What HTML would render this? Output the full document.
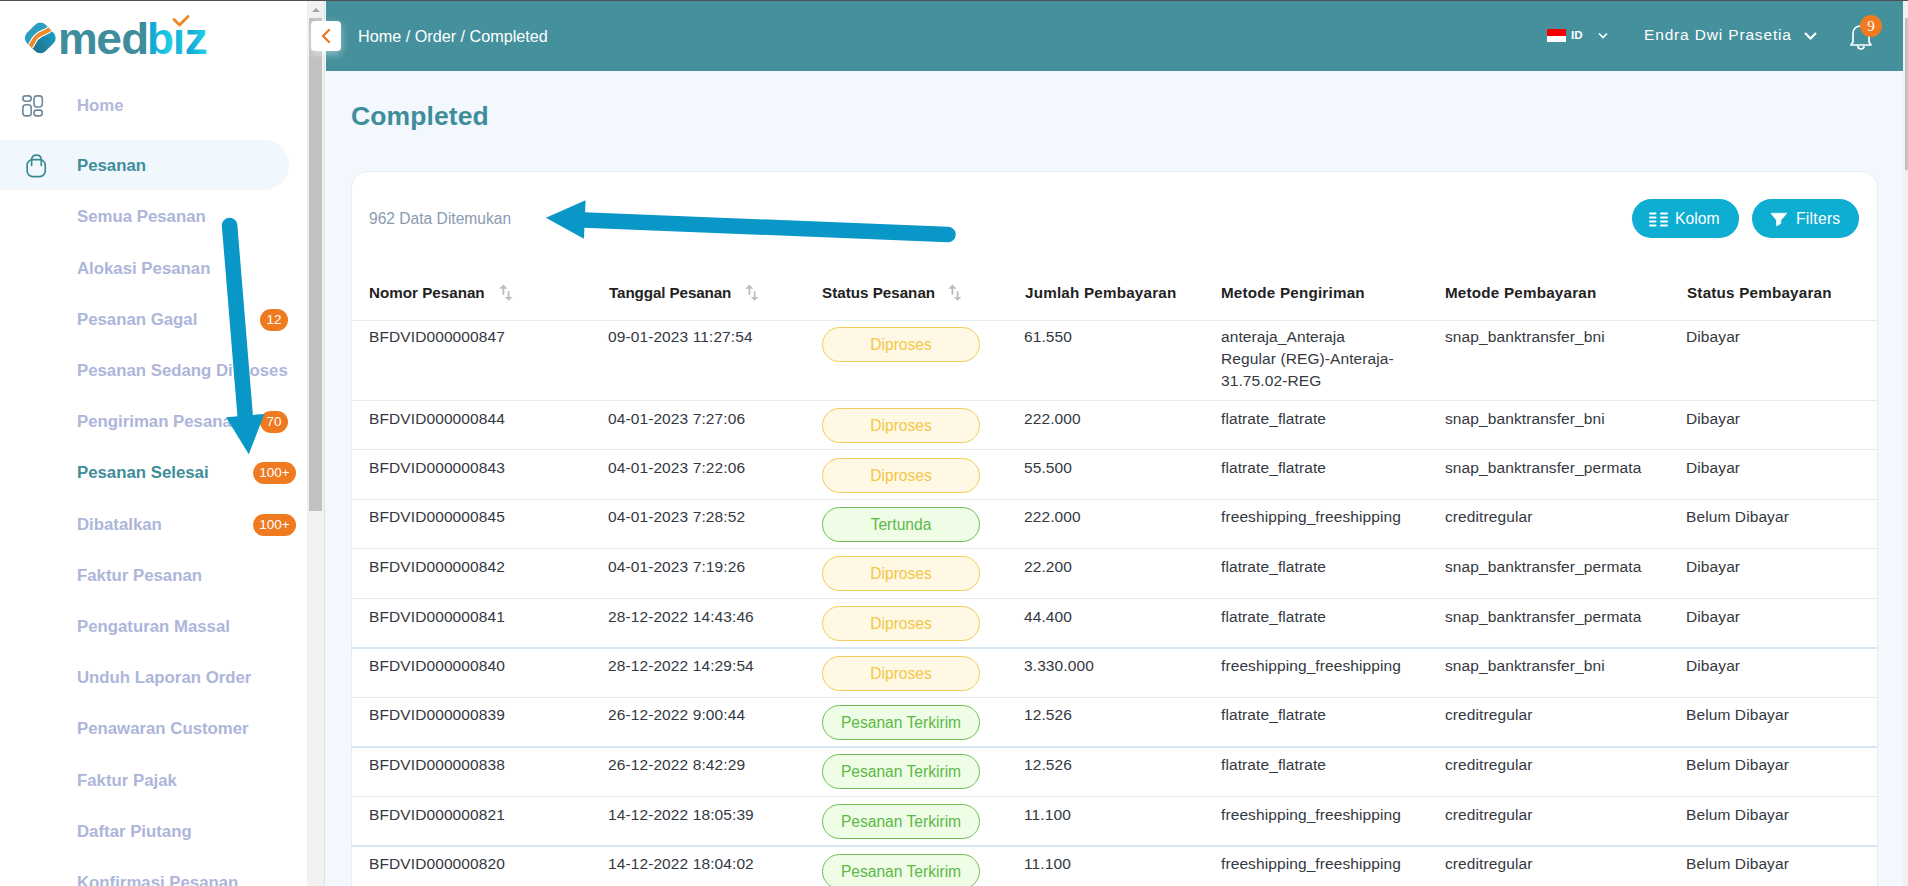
<!DOCTYPE html>
<html><head><meta charset="utf-8">
<style>
*{box-sizing:border-box}
html,body{margin:0;padding:0}
body{width:1908px;height:886px;overflow:hidden;position:relative;background:#f2f8fd;font-family:"Liberation Sans",sans-serif}
.a{position:absolute;white-space:nowrap}
#topline{left:0;top:0;width:1908px;height:1px;background:#505050;z-index:50}
#sidebar{left:0;top:0;width:307px;height:886px;background:#fff}
#sbtrack{left:307px;top:1px;width:18px;height:885px;background:#f1f1f1;border-right:1px solid #e2e2e2}
#sbthumb{left:309px;top:18px;width:13px;height:493px;background:#c1c1c1}
.nav{left:77px;font-size:16.8px;font-weight:bold;color:#adb6da;line-height:20px}
.badge{height:22px;border-radius:11px;background:#ef7a1f;color:#fff;font-size:13.5px;line-height:22px;text-align:center}
#header{left:326px;top:1px;width:1577px;height:70px;background:#44909c}
#rtrack{left:1903px;top:1px;width:5px;height:885px;background:#f1f1f1}
#rthumb{left:1905px;top:18px;width:3px;height:152px;background:#c1c1c1}
#card{left:350.5px;top:170.5px;width:1527px;height:760px;background:#fff;border:1px solid #e6edf3;border-radius:17px}
.th{font-size:15.2px;font-weight:bold;color:#222;line-height:20px}
.td{font-size:15.5px;color:#343841;line-height:22px;letter-spacing:0.1px}
.rowb{left:351px;width:1526px;height:1px;background:#e3ecf3}
.pill{left:822px;width:158px;height:35px;border-radius:18px;font-size:15.6px;text-align:center;line-height:33px}
.py{border:1px solid #f2cd57;background:#fff8e5;color:#f2c745}
.pg{border:1px solid #6fc156;background:#effde6;color:#5cb848}
.btn{top:199px;height:39px;border-radius:20px;background:#0eadd2;color:#fff;font-size:15.7px;line-height:39px}
</style></head>
<body>
<div class="a" id="topline"></div>
<div class="a" id="sidebar"></div>

<!-- logo -->
<svg class="a" style="left:0;top:0" width="230" height="70" viewBox="0 0 230 70">
  <defs>
    <linearGradient id="lg1" x1="0" y1="0" x2="1" y2="0"><stop offset="0" stop-color="#0f9fd0"/><stop offset="1" stop-color="#22d4e8"/></linearGradient>
    <linearGradient id="lg3" x1="0.2" y1="0.9" x2="0.9" y2="0.4"><stop offset="0" stop-color="#1b6a83"/><stop offset="0.5" stop-color="#1d819f"/><stop offset="1" stop-color="#1aa0ca"/></linearGradient>
    <clipPath id="cp1"><rect x="27.4" y="25" width="26" height="26" rx="7.5" transform="rotate(-45 40.4 38)"/></clipPath>
  </defs>
  <g clip-path="url(#cp1)">
    <rect x="20" y="18" width="42" height="42" fill="url(#lg3)"/>
    <path d="M20 18 H62 V22 L52 27.5 C49.5 29.5 47.5 31 45 32 C41 33.5 38 35 35.5 38 C33 41 32.5 44.5 29.5 47.5 L20 52 Z" fill="#2a9fc1"/>
    <path d="M29.5 47.5 C32.5 44.5 33 41 35.5 38 C38 35 41 33.5 45 32 C47.5 31 49.5 29.5 52 27.5" stroke="#fff" stroke-width="6.4" fill="none"/>
    <path d="M29.5 47.5 C32.5 44.5 33 41 35.5 38 C38 35 41 33.5 45 32 C47.5 31 49.5 29.5 52 27.5" stroke="#ef8a2c" stroke-width="4.2" fill="none"/>
  </g>
  <text transform="translate(58.06 53.5) scale(1.004 1)" font-family="Liberation Sans" font-weight="bold" font-size="44.5" fill="#3e8d9c">m</text>
  <text transform="translate(96.20 53.5) scale(1.038 1)" font-family="Liberation Sans" font-weight="bold" font-size="44.5" fill="#3e8d9c">e</text>
  <text transform="translate(121.13 53.5) scale(1.026 1)" font-family="Liberation Sans" font-weight="bold" font-size="44.5" fill="#3e8d9c">d</text>
  <text transform="translate(147.08 53.5) scale(0.994 1)" font-family="Liberation Sans" font-weight="bold" font-size="44.5" fill="url(#lg1)">b</text>
  <text transform="translate(173.06 53.5) scale(0.966 1)" font-family="Liberation Sans" font-weight="bold" font-size="44.5" fill="url(#lg1)">ı</text>
  <text transform="translate(184.66 53.5) scale(1.034 1)" font-family="Liberation Sans" font-weight="bold" font-size="44.5" fill="url(#lg1)">z</text>
  <path d="M174 19.5 L179.5 25 L188 16.5" stroke="#ec8a2c" stroke-width="3" fill="none" stroke-linecap="round" stroke-linejoin="round"/>
</svg>

<!-- Home icon -->
<svg class="a" style="left:21px;top:94px" width="24" height="24" viewBox="0 0 24 24" fill="none" stroke="#70879b" stroke-width="1.6">
  <rect x="1.9" y="1.9" width="8.3" height="5.3" rx="2.6"/>
  <rect x="1.9" y="10.8" width="8.3" height="11.1" rx="3"/>
  <rect x="13" y="1.9" width="8.3" height="11.1" rx="3"/>
  <rect x="13" y="16.1" width="8.3" height="5.8" rx="2.6"/>
</svg>
<div class="a nav" style="top:96.3px;color:#b2b8dc">Home</div>

<!-- Pesanan active -->
<div class="a" style="left:0;top:140px;width:289px;height:50px;background:#f0f7fd;border-radius:0 25px 25px 0"></div>
<svg class="a" style="left:25px;top:152px" width="22" height="26" viewBox="0 0 22 26" fill="none" stroke="#3b8a92" stroke-width="1.7" stroke-linecap="round">
  <rect x="2.15" y="7.65" width="18.1" height="16.9" rx="5.5"/>
  <path d="M6.6 13.3 V8 Q6.6 3.1 11.45 3.1 Q16.3 3.1 16.3 8 V13.3"/>
</svg>
<div class="a nav" style="top:156.3px;color:#3f8d9b">Pesanan</div>

<div class="a nav" style="top:207.3px">Semua Pesanan</div>
<div class="a nav" style="top:258.5px">Alokasi Pesanan</div>
<div class="a nav" style="top:309.7px">Pesanan Gagal</div>
<div class="a nav" style="top:360.9px">Pesanan Sedang Diproses</div>
<div class="a nav" style="top:412.1px">Pengiriman Pesanan</div>
<div class="a nav" style="top:463.3px;color:#3f8d9b">Pesanan Selesai</div>
<div class="a nav" style="top:514.5px">Dibatalkan</div>
<div class="a nav" style="top:565.7px">Faktur Pesanan</div>
<div class="a nav" style="top:616.9px">Pengaturan Massal</div>
<div class="a nav" style="top:668.1px">Unduh Laporan Order</div>
<div class="a nav" style="top:719.3px">Penawaran Customer</div>
<div class="a nav" style="top:770.5px">Faktur Pajak</div>
<div class="a nav" style="top:821.7px">Daftar Piutang</div>
<div class="a nav" style="top:872.9px">Konfirmasi Pesanan</div>

<div class="a badge" style="left:260px;top:309px;width:28px">12</div>
<div class="a badge" style="left:260px;top:411px;width:28px">70</div>
<div class="a badge" style="left:253px;top:462px;width:43px">100+</div>
<div class="a badge" style="left:253px;top:514px;width:43px">100+</div>

<div class="a" id="sbtrack"></div>
<div class="a" id="sbthumb"></div>
<svg class="a" style="left:307px;top:0px" width="18" height="16" viewBox="0 0 18 16"><path d="M5 12 L9 8 L13 12 Z" fill="#a3a3a3"/></svg>

<!-- header -->
<div class="a" id="header"></div>
<div class="a" style="left:311px;top:21px;width:30px;height:30px;background:#fff;border-radius:4px;box-shadow:0 3px 8px rgba(255,255,255,0.45)"></div>
<svg class="a" style="left:311px;top:21px" width="30" height="30" viewBox="0 0 30 30"><path d="M18 9 L12 15 L18 21" stroke="#e8792a" stroke-width="2.4" fill="none" stroke-linecap="round" stroke-linejoin="round"/></svg>
<div class="a" style="left:358px;top:26px;font-size:16.2px;line-height:20px;color:#fff">Home / Order / Completed</div>

<!-- flag -->
<div class="a" style="left:1547px;top:28.5px;width:19px;height:7px;background:#f40000"></div>
<div class="a" style="left:1547px;top:35.5px;width:19px;height:6.5px;background:#fff"></div>
<div class="a" style="left:1571px;top:28px;font-size:11.6px;font-weight:bold;line-height:14px;color:#fff">ID</div>
<svg class="a" style="left:1597px;top:30px" width="12" height="12" viewBox="0 0 12 12"><path d="M2 3.5 L6 7.5 L10 3.5" stroke="#fff" stroke-width="1.6" fill="none"/></svg>
<div class="a" style="left:1644px;top:24.5px;font-size:15.5px;line-height:20px;color:#fff;letter-spacing:0.84px">Endra Dwi Prasetia</div>
<svg class="a" style="left:1803px;top:29px" width="15" height="13" viewBox="0 0 15 13"><path d="M2 4 L7.5 9.5 L13 4" stroke="#fff" stroke-width="2.2" fill="none"/></svg>
<!-- bell -->
<svg class="a" style="left:1848px;top:22px" width="26" height="30" viewBox="0 0 26 30" fill="none" stroke="#fff" stroke-width="1.7">
  <path d="M3 23 H23 L21 20 V12 Q21 4 13 4 Q5 4 5 12 V20 Z" stroke-linejoin="round"/>
  <path d="M10 24 Q10 27 13 27 Q16 27 16 24"/>
</svg>
<div class="a" style="left:1860px;top:14.5px;width:22px;height:22px;border-radius:11px;background:#ef7a1f;color:#fff;font-family:'Liberation Serif',serif;font-size:15px;line-height:22px;text-align:center">9</div>

<div class="a" id="rtrack"></div>
<div class="a" id="rthumb"></div>

<!-- title -->
<div class="a" style="left:351px;top:101px;font-size:26.5px;font-weight:bold;line-height:30px;color:#3f8d9b;letter-spacing:0.1px">Completed</div>

<!-- card -->
<div class="a" id="card"></div>
<div class="a" style="left:369px;top:209px;font-size:15.6px;line-height:20px;color:#8a9bb1">962 Data Ditemukan</div>

<div class="a btn" style="left:1632px;width:107px"></div>
<svg class="a" style="left:1648px;top:212px" width="21" height="16" viewBox="0 0 21 16" fill="#fff">
  <rect x="1" y="0.5" width="7.5" height="2" rx="1"/><rect x="1" y="4.5" width="7.5" height="2" rx="1"/><rect x="1" y="8.5" width="7.5" height="2" rx="1"/><rect x="1" y="12.5" width="7.5" height="2" rx="1"/>
  <rect x="12" y="0.5" width="8" height="2" rx="1"/><rect x="12" y="4.5" width="8" height="2" rx="1"/><rect x="12" y="8.5" width="8" height="2" rx="1"/><rect x="12" y="12.5" width="8" height="2" rx="1"/>
</svg>
<div class="a" style="left:1675px;top:209px;font-size:15.7px;line-height:20px;color:#fff">Kolom</div>

<div class="a btn" style="left:1752px;width:107px"></div>
<svg class="a" style="left:1770px;top:212px" width="18" height="15" viewBox="0 0 18 15" fill="#fff">
  <path d="M0.8 1.2 H16.9 L10.8 8.3 V11.6 L6.5 14 V8.3 Z" stroke="#fff" stroke-width="0.6" stroke-linejoin="round"/>
</svg>
<div class="a" style="left:1796px;top:209px;font-size:15.7px;line-height:20px;color:#fff;letter-spacing:0.25px">Filters</div>

<!-- table header -->
<div class="a th" style="left:369px;top:283px">Nomor Pesanan</div>
<div class="a th" style="left:609px;top:283px;letter-spacing:-0.1px">Tanggal Pesanan</div>
<div class="a th" style="left:822px;top:283px">Status Pesanan</div>
<div class="a th" style="left:1025px;top:283px;letter-spacing:0.22px">Jumlah Pembayaran</div>
<div class="a th" style="left:1221px;top:283px;letter-spacing:0.22px">Metode Pengiriman</div>
<div class="a th" style="left:1445px;top:283px;letter-spacing:0.22px">Metode Pembayaran</div>
<div class="a th" style="left:1687px;top:283px;letter-spacing:0.22px">Status Pembayaran</div>

<svg class="a" style="left:497px;top:283px" width="16" height="19" viewBox="0 0 16 19"><path d="M6.4 5 V11.8 M11.6 8.2 V14.5" stroke="#bdbdbd" stroke-width="1.8"/><path d="M6.4 1.5 L2.3 5.8 H10.5 Z M11.6 17.8 L7.8 14 H15.4 Z" fill="#bdbdbd"/></svg>
<svg class="a" style="left:743px;top:283px" width="16" height="19" viewBox="0 0 16 19"><path d="M6.4 5 V11.8 M11.6 8.2 V14.5" stroke="#bdbdbd" stroke-width="1.8"/><path d="M6.4 1.5 L2.3 5.8 H10.5 Z M11.6 17.8 L7.8 14 H15.4 Z" fill="#bdbdbd"/></svg>
<svg class="a" style="left:946px;top:283px" width="16" height="19" viewBox="0 0 16 19"><path d="M6.4 5 V11.8 M11.6 8.2 V14.5" stroke="#bdbdbd" stroke-width="1.8"/><path d="M6.4 1.5 L2.3 5.8 H10.5 Z M11.6 17.8 L7.8 14 H15.4 Z" fill="#bdbdbd"/></svg>

<!--ROWS-->
<div class="a rowb" style="top:320px"></div>
<div class="a td" style="left:369px;top:326px">BFDVID000000847</div>
<div class="a td" style="left:608px;top:326px">09-01-2023 11:27:54</div>
<div class="a pill py" style="top:327px">Diproses</div>
<div class="a td" style="left:1024px;top:326px">61.550</div>
<div class="a td" style="left:1221px;top:326px">anteraja_Anteraja<br>Regular (REG)-Anteraja-<br>31.75.02-REG</div>
<div class="a td" style="left:1445px;top:326px">snap_banktransfer_bni</div>
<div class="a td" style="left:1686px;top:326px">Dibayar</div>
<div class="a rowb" style="top:399.8px"></div>
<div class="a td" style="left:369px;top:408px">BFDVID000000844</div>
<div class="a td" style="left:608px;top:408px">04-01-2023 7:27:06</div>
<div class="a pill py" style="top:408px">Diproses</div>
<div class="a td" style="left:1024px;top:408px">222.000</div>
<div class="a td" style="left:1221px;top:408px">flatrate_flatrate</div>
<div class="a td" style="left:1445px;top:408px">snap_banktransfer_bni</div>
<div class="a td" style="left:1686px;top:408px">Dibayar</div>
<div class="a rowb" style="top:449.3px"></div>
<div class="a td" style="left:369px;top:457px">BFDVID000000843</div>
<div class="a td" style="left:608px;top:457px">04-01-2023 7:22:06</div>
<div class="a pill py" style="top:458px">Diproses</div>
<div class="a td" style="left:1024px;top:457px">55.500</div>
<div class="a td" style="left:1221px;top:457px">flatrate_flatrate</div>
<div class="a td" style="left:1445px;top:457px">snap_banktransfer_permata</div>
<div class="a td" style="left:1686px;top:457px">Dibayar</div>
<div class="a rowb" style="top:498.8px"></div>
<div class="a td" style="left:369px;top:506px">BFDVID000000845</div>
<div class="a td" style="left:608px;top:506px">04-01-2023 7:28:52</div>
<div class="a pill pg" style="top:507px">Tertunda</div>
<div class="a td" style="left:1024px;top:506px">222.000</div>
<div class="a td" style="left:1221px;top:506px">freeshipping_freeshipping</div>
<div class="a td" style="left:1445px;top:506px">creditregular</div>
<div class="a td" style="left:1686px;top:506px">Belum Dibayar</div>
<div class="a rowb" style="top:548.3px"></div>
<div class="a td" style="left:369px;top:556px">BFDVID000000842</div>
<div class="a td" style="left:608px;top:556px">04-01-2023 7:19:26</div>
<div class="a pill py" style="top:556px">Diproses</div>
<div class="a td" style="left:1024px;top:556px">22.200</div>
<div class="a td" style="left:1221px;top:556px">flatrate_flatrate</div>
<div class="a td" style="left:1445px;top:556px">snap_banktransfer_permata</div>
<div class="a td" style="left:1686px;top:556px">Dibayar</div>
<div class="a rowb" style="top:597.8px"></div>
<div class="a td" style="left:369px;top:606px">BFDVID000000841</div>
<div class="a td" style="left:608px;top:606px">28-12-2022 14:43:46</div>
<div class="a pill py" style="top:606px">Diproses</div>
<div class="a td" style="left:1024px;top:606px">44.400</div>
<div class="a td" style="left:1221px;top:606px">flatrate_flatrate</div>
<div class="a td" style="left:1445px;top:606px">snap_banktransfer_permata</div>
<div class="a td" style="left:1686px;top:606px">Dibayar</div>
<div class="a rowb" style="top:647.3px;background:#d6e6f3;height:1.6px"></div>
<div class="a td" style="left:369px;top:655px">BFDVID000000840</div>
<div class="a td" style="left:608px;top:655px">28-12-2022 14:29:54</div>
<div class="a pill py" style="top:656px">Diproses</div>
<div class="a td" style="left:1024px;top:655px">3.330.000</div>
<div class="a td" style="left:1221px;top:655px">freeshipping_freeshipping</div>
<div class="a td" style="left:1445px;top:655px">snap_banktransfer_bni</div>
<div class="a td" style="left:1686px;top:655px">Dibayar</div>
<div class="a rowb" style="top:696.8px"></div>
<div class="a td" style="left:369px;top:704px">BFDVID000000839</div>
<div class="a td" style="left:608px;top:704px">26-12-2022 9:00:44</div>
<div class="a pill pg" style="top:705px">Pesanan Terkirim</div>
<div class="a td" style="left:1024px;top:704px">12.526</div>
<div class="a td" style="left:1221px;top:704px">flatrate_flatrate</div>
<div class="a td" style="left:1445px;top:704px">creditregular</div>
<div class="a td" style="left:1686px;top:704px">Belum Dibayar</div>
<div class="a rowb" style="top:746.3px;background:#d6e6f3;height:1.6px"></div>
<div class="a td" style="left:369px;top:754px">BFDVID000000838</div>
<div class="a td" style="left:608px;top:754px">26-12-2022 8:42:29</div>
<div class="a pill pg" style="top:754px">Pesanan Terkirim</div>
<div class="a td" style="left:1024px;top:754px">12.526</div>
<div class="a td" style="left:1221px;top:754px">flatrate_flatrate</div>
<div class="a td" style="left:1445px;top:754px">creditregular</div>
<div class="a td" style="left:1686px;top:754px">Belum Dibayar</div>
<div class="a rowb" style="top:795.8px"></div>
<div class="a td" style="left:369px;top:804px">BFDVID000000821</div>
<div class="a td" style="left:608px;top:804px">14-12-2022 18:05:39</div>
<div class="a pill pg" style="top:804px">Pesanan Terkirim</div>
<div class="a td" style="left:1024px;top:804px">11.100</div>
<div class="a td" style="left:1221px;top:804px">freeshipping_freeshipping</div>
<div class="a td" style="left:1445px;top:804px">creditregular</div>
<div class="a td" style="left:1686px;top:804px">Belum Dibayar</div>
<div class="a rowb" style="top:845.3px;background:#d6e6f3;height:1.6px"></div>
<div class="a td" style="left:369px;top:853px">BFDVID000000820</div>
<div class="a td" style="left:608px;top:853px">14-12-2022 18:04:02</div>
<div class="a pill pg" style="top:854px">Pesanan Terkirim</div>
<div class="a td" style="left:1024px;top:853px">11.100</div>
<div class="a td" style="left:1221px;top:853px">freeshipping_freeshipping</div>
<div class="a td" style="left:1445px;top:853px">creditregular</div>
<div class="a td" style="left:1686px;top:853px">Belum Dibayar</div>
<div class="a rowb" style="top:894.8px"></div>
<!--/ROWS-->
<!-- annotation arrows -->
<svg class="a" style="left:0;top:0;z-index:40" width="1908" height="886" viewBox="0 0 1908 886">
  <path d="M229.6 225.5 L245.2 416" stroke="#0897c7" stroke-width="15.5" stroke-linecap="round" fill="none"/>
  <path d="M226.1 417.3 L264.3 413.9 L248.8 454.2 Z" fill="#0897c7"/>
  <path d="M948 234.5 L584 220" stroke="#0897c7" stroke-width="15.5" stroke-linecap="round" fill="none"/>
  <path d="M545.9 217.8 L585.6 200.2 L583.9 238.8 Z" fill="#0897c7"/>
</svg>
</body></html>
